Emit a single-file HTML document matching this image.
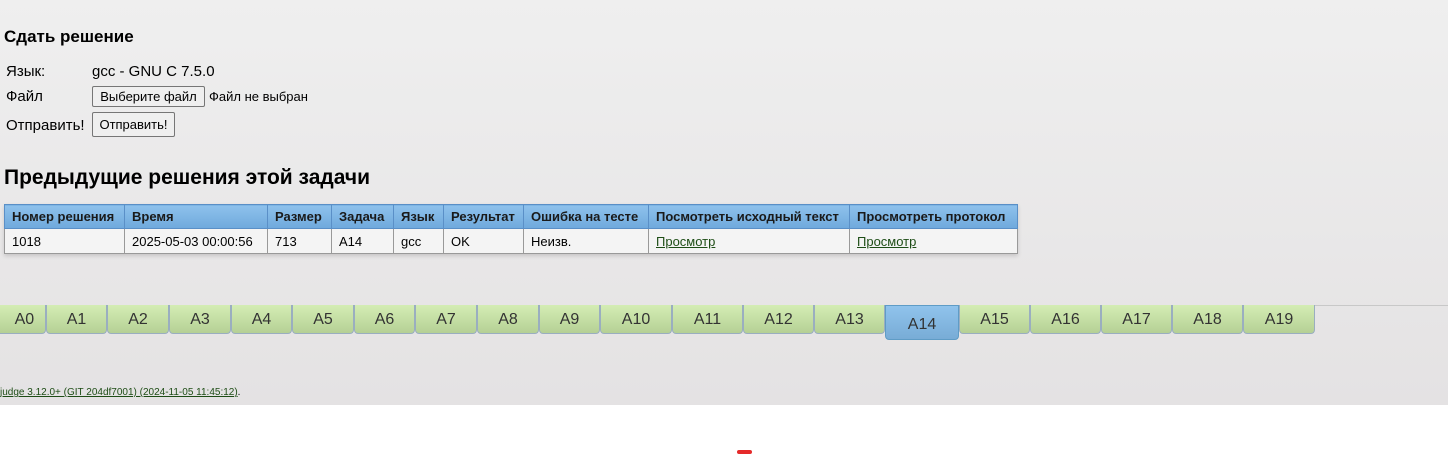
<!DOCTYPE html>
<html><head><meta charset="utf-8"><style>
body{margin:0;width:1448px;height:455px;background:#fff;position:relative;overflow:hidden;font-family:"Liberation Sans","DejaVu Sans",sans-serif;color:#000}
.bg{position:absolute;left:0;top:0;width:1448px;height:405px;background:linear-gradient(#efefef,#e4e2e3)}
.a{position:absolute;white-space:nowrap}
h3{margin:0;font-size:17px;font-weight:bold}
h2{margin:0;font-size:21px;font-weight:bold}
.btn{position:absolute;border:1px solid #767676;border-radius:2px;background:#efefef;font-size:13px;text-align:center;box-sizing:border-box}
table{position:absolute;left:4px;top:204px;border-collapse:collapse;font-size:13px;box-shadow:0 2px 4px rgba(0,0,0,.15)}
th{background:linear-gradient(#8ec1ec,#6fa9dc);border:1px solid #5a8fc7;text-align:left;padding:0 7px;height:23px;font-weight:bold;color:#1a1a1a}
td{background:#f4f4f4;border:1px solid #999;padding:0 7px;height:24px}
a{color:#1e4d16;text-decoration:underline}
.tab{position:absolute;top:305px;height:29px;box-sizing:border-box;background:linear-gradient(#d4edb4,#b5d095);border:1px solid #9aaec0;border-top:none;border-radius:0 0 4px 4px;font-size:16px;color:#333;text-align:center;line-height:29px}
.sel{height:35px;background:linear-gradient(#90c3ec,#78acd6);border:1px solid #5f9cc6;line-height:38px}
</style></head><body>
<div class="bg"></div>
<div class="a" style="left:0;top:305px;width:1448px;height:1px;background:#c8c8c8"></div>
<h3 class="a" style="left:4px;top:27px">Сдать решение</h3>
<div class="a" style="left:6px;top:63px;font-size:15px">Язык:</div>
<div class="a" style="left:92px;top:63px;font-size:15px">gcc - GNU C 7.5.0</div>
<div class="a" style="left:6px;top:88px;font-size:15px">Файл</div>
<div class="btn" style="left:92px;top:86px;width:113px;height:21px;line-height:19px">Выберите файл</div>
<div class="a" style="left:209px;top:89px;font-size:13px">Файл не выбран</div>
<div class="a" style="left:6px;top:117px;font-size:15px">Отправить!</div>
<div class="btn" style="left:92px;top:112px;width:83px;height:25px;line-height:23px">Отправить!</div>
<h2 class="a" style="left:4px;top:166px">Предыдущие решения этой задачи</h2>
<table>
<tr><th style="width:105px">Номер решения</th><th style="width:128px">Время</th><th style="width:49px">Размер</th><th style="width:47px">Задача</th><th style="width:35px">Язык</th><th style="width:65px">Результат</th><th style="width:110px">Ошибка на тесте</th><th style="width:186px">Посмотреть исходный текст</th><th style="width:153px">Просмотреть протокол</th></tr>
<tr><td>1018</td><td>2025-05-03 00:00:56</td><td>713</td><td>A14</td><td>gcc</td><td>OK</td><td>Неизв.</td><td><a>Просмотр</a></td><td><a>Просмотр</a></td></tr>
</table>
<div class="tab" style="left:-15px;width:61px">&nbsp;&nbsp;&nbsp;&nbsp;A0</div>
<div class="tab" style="left:46px;width:61px">A1</div>
<div class="tab" style="left:107px;width:62px">A2</div>
<div class="tab" style="left:169px;width:62px">A3</div>
<div class="tab" style="left:231px;width:61px">A4</div>
<div class="tab" style="left:292px;width:62px">A5</div>
<div class="tab" style="left:354px;width:61px">A6</div>
<div class="tab" style="left:415px;width:62px">A7</div>
<div class="tab" style="left:477px;width:62px">A8</div>
<div class="tab" style="left:539px;width:61px">A9</div>
<div class="tab" style="left:600px;width:72px">A10</div>
<div class="tab" style="left:672px;width:71px">A11</div>
<div class="tab" style="left:743px;width:71px">A12</div>
<div class="tab" style="left:814px;width:71px">A13</div>
<div class="tab sel" style="left:885px;width:74px">A14</div>
<div class="tab" style="left:959px;width:71px">A15</div>
<div class="tab" style="left:1030px;width:71px">A16</div>
<div class="tab" style="left:1101px;width:71px">A17</div>
<div class="tab" style="left:1172px;width:71px">A18</div>
<div class="tab" style="left:1243px;width:72px">A19</div>
<div class="a" style="left:0;top:387px;font-size:10px"><a>judge 3.12.0+ (GIT 204df7001) (2024-11-05 11:45:12)</a>.</div>
<div class="a" style="left:737px;top:450px;width:15px;height:4px;background:#e52a2a;border-radius:2px"></div>
</body></html>
